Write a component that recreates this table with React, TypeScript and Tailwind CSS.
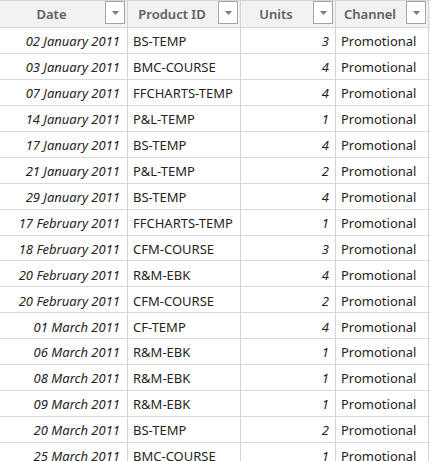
const rows: [string, string, number, string][] = [
  ['02 January 2011', 'BS-TEMP', 3, 'Promotional'],
  ['03 January 2011', 'BMC-COURSE', 4, 'Promotional'],
  ['07 January 2011', 'FFCHARTS-TEMP', 4, 'Promotional'],
  ['14 January 2011', 'P&L-TEMP', 1, 'Promotional'],
  ['17 January 2011', 'BS-TEMP', 4, 'Promotional'],
  ['21 January 2011', 'P&L-TEMP', 2, 'Promotional'],
  ['29 January 2011', 'BS-TEMP', 4, 'Promotional'],
  ['17 February 2011', 'FFCHARTS-TEMP', 1, 'Promotional'],
  ['18 February 2011', 'CFM-COURSE', 3, 'Promotional'],
  ['20 February 2011', 'R&M-EBK', 4, 'Promotional'],
  ['20 February 2011', 'CFM-COURSE', 2, 'Promotional'],
  ['01 March 2011', 'CF-TEMP', 4, 'Promotional'],
  ['06 March 2011', 'R&M-EBK', 1, 'Promotional'],
  ['08 March 2011', 'R&M-EBK', 1, 'Promotional'],
  ['09 March 2011', 'R&M-EBK', 1, 'Promotional'],
  ['20 March 2011', 'BS-TEMP', 2, 'Promotional'],
  ['25 March 2011', 'BMC-COURSE', 1, 'Promotional'],
];

const cols = 'grid grid-cols-[128px_113px_95px_93px]';

function FilterButton() {
  return (
    <span className="absolute right-[2px] top-0 flex h-[23px] w-[20px] items-center justify-center border border-[#a6a6a6] bg-white">
      <svg width="7" height="4" viewBox="0 0 7 4">
        <path d="M0 0h7L3.5 4z" fill="#7a7a7a" />
      </svg>
    </span>
  );
}

function HeaderCell({ label }: { label: string }) {
  return (
    <div className="relative flex h-[26px] items-center border-r border-[#d4d4d4] pr-[24px] pt-[2px]">
      <span className="flex-1 text-center font-semibold text-[#605e5c]">{label}</span>
      <FilterButton />
    </div>
  );
}

export default function App() {
  return (
    <div
      className="h-[461px] w-[430px] overflow-hidden bg-white text-[13px] text-[#252423]"
      style={{ fontFamily: '"Segoe UI", "Noto Sans", sans-serif' }}
    >
      <div className={`${cols} border-b border-t border-[#d4d4d4] bg-[#f2f2f2]`}>
        <HeaderCell label="Date" />
        <HeaderCell label="Product ID" />
        <HeaderCell label="Units" />
        <HeaderCell label="Channel" />
      </div>
      {rows.map(([date, product, units, channel], i) => (
        <div key={i} className={`${cols} h-[25.94px] border-b border-[#d9d9d9]`}>
          <div className="flex items-center justify-end border-r border-[#d4d4d4] pr-[7px] pt-[3px] italic">{date}</div>
          <div className="flex items-center border-r border-[#d4d4d4] pl-[5px] pt-[3px]">{product}</div>
          <div className="flex items-center justify-end border-r border-[#d4d4d4] pr-[6px] pt-[3px] italic">{units}</div>
          <div className="flex items-center border-r border-[#d4d4d4] pl-[5px] pt-[3px]">{channel}</div>
        </div>
      ))}
    </div>
  );
}
